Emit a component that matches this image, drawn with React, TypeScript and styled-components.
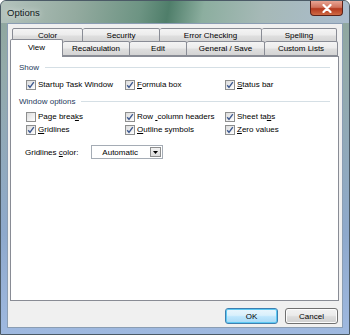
import React from 'react';
import styled, { createGlobalStyle } from 'styled-components';

const GlobalStyle = createGlobalStyle`
  html, body {
    margin: 0;
    padding: 0;
    background: #ffffff;
  }
  body {
    font-family: "Liberation Sans", Arial, sans-serif;
    font-size: 8px;
    color: #000;
  }
`;

const Window = styled.div`
  width: 350px;
  height: 335px;
  box-sizing: border-box;
  display: flex;
  flex-direction: column;
  background: linear-gradient(180deg, #8ea69b 0%, #93aaa9 20%, #8ea9cc 70%, #9fb9e0 100%);
  border: 1px solid #4b5a66;
  border-radius: 6px 6px 0 0;
  overflow: hidden;
`;

const TitleBar = styled.div`
  height: 22px;
  display: flex;
  align-items: center;
  padding: 0 6px;
  position: relative;
  background: linear-gradient(100deg, #b4c3bd 0%, #93aa9f 22%, #6d9483 40%, #4f7e6a 48%, #8cae9f 58%, #a6b9b7 75%, #aabcce 100%);
`;

const Title = styled.span`
  font-size: 9.5px;
  color: #101820;
  text-shadow: 0 0 6px rgba(255, 255, 255, 0.9);
`;

const CloseButton = styled.div`
  position: absolute;
  right: 6px;
  top: 0;
  width: 33px;
  height: 15px;
  border: 1px solid #5b2219;
  border-top: none;
  border-radius: 0 0 4px 4px;
  background: linear-gradient(180deg, #e8a493 0%, #d0735d 45%, #b4391e 55%, #cf6a44 100%);
  display: flex;
  align-items: center;
  justify-content: center;
  box-sizing: border-box;
`;

const Client = styled.div`
  flex: 1;
  margin: 0 6px 6px 6px;
  background: #f0f0f0;
  border: 1px solid #8a9db3;
  display: flex;
  flex-direction: column;
  padding: 4px 3px 0 2px;
`;

const TabRow = styled.div<{ $front?: boolean }>`
  display: flex;
  align-items: flex-end;
  height: ${p => (p.$front ? 14 : 15)}px;
  padding-left: ${p => (p.$front ? 0 : 2)}px;
  margin-top: ${p => (p.$front ? -1 : 0)}px;
`;

const Tab = styled.div<{ $w: number; $active?: boolean }>`
  width: ${p => p.$w}px;
  height: ${p => (p.$active ? 18 : p.$w && 15)}px;
  box-sizing: border-box;
  border: 1px solid #898c95;
  border-bottom: ${p => (p.$active ? 'none' : '1px solid #898c95')};
  border-left-width: ${p => (p.$active ? 1 : 0)}px;
  border-radius: 2px 2px 0 0;
  background: ${p =>
    p.$active
      ? '#ffffff'
      : 'linear-gradient(180deg, #f4f4f4 0%, #ececec 45%, #dedede 55%, #d4d4d4 100%)'};
  margin-bottom: ${p => (p.$active ? -1 : 0)}px;
  position: relative;
  z-index: ${p => (p.$active ? 2 : 1)};
  display: flex;
  align-items: center;
  justify-content: center;
  padding-bottom: ${p => (p.$active ? 3 : 0)}px;
  white-space: nowrap;

  &:first-child {
    border-left-width: 1px;
  }
`;

const Panel = styled.div`
  height: 245px;
  box-sizing: border-box;
  background: #ffffff;
  border: 1px solid #898c95;
  padding: 4px 8px 0 8px;
  display: flex;
  flex-direction: column;
`;

const GroupHeader = styled.div<{ $top: number }>`
  display: flex;
  align-items: center;
  height: 12px;
  gap: 6px;
  margin-top: ${p => p.$top}px;
  color: #1e395b;

  &::after {
    content: '';
    flex: 1;
    height: 1px;
    background: #d5dfe5;
  }
`;

const CheckGrid = styled.div<{ $top: number }>`
  display: grid;
  grid-template-columns: 99px 100px 100px;
  grid-auto-rows: 13px;
  padding-left: 7px;
  margin-top: ${p => p.$top}px;
`;

const CheckItem = styled.label`
  display: flex;
  align-items: center;
  gap: 2px;
  white-space: nowrap;
`;

const Box = styled.span<{ $checked?: boolean }>`
  width: 10px;
  height: 10px;
  box-sizing: border-box;
  border: 1px solid #8e8f8f;
  background: linear-gradient(135deg, #dcdcdc 0%, #f4f4f4 70%, #ffffff 100%);
  display: flex;
  align-items: center;
  justify-content: center;
  flex: none;
`;

const ColorRow = styled.div`
  display: flex;
  align-items: center;
  margin-top: 9px;
  padding-left: 6px;
  gap: 13px;
`;

const Select = styled.div`
  width: 72px;
  height: 14px;
  box-sizing: border-box;
  border: 1px solid #a5acb5;
  background: #fff;
  display: flex;
  align-items: center;
  padding: 0 1px 0 0;
`;

const SelectText = styled.span`
  flex: 1;
  padding-left: 10px;
`;

const SelectArrow = styled.span`
  width: 11px;
  height: 10px;
  box-sizing: border-box;
  border: 1px solid #8e8f8f;
  background: linear-gradient(180deg, #f2f2f2 0%, #dcdcdc 100%);
  display: flex;
  align-items: center;
  justify-content: center;
`;

const ButtonRow = styled.div`
  display: flex;
  justify-content: flex-end;
  gap: 7px;
  margin-top: 7px;
  padding-right: 1px;
`;

const Button = styled.div<{ $default?: boolean }>`
  width: 53px;
  height: 16px;
  box-sizing: border-box;
  border: 1px solid ${p => (p.$default ? '#3c7fb1' : '#707070')};
  border-radius: 3px;
  background: ${p =>
    p.$default
      ? 'linear-gradient(180deg, #eaf6fd 0%, #d9f0fc 45%, #bee6fd 55%, #a7d9f5 100%)'
      : 'linear-gradient(180deg, #f2f2f2 0%, #ebebeb 45%, #dddddd 55%, #cfcfcf 100%)'};
  box-shadow: inset 0 0 0 1px ${p => (p.$default ? '#5ec9f3' : '#fcfcfc')};
  display: flex;
  align-items: center;
  justify-content: center;
`;

const Key = styled.span`
  text-decoration: underline;
`;

const Check = () => (
  <svg width="8" height="8" viewBox="0 0 8 8">
    <path d="M1.2 4.2 L3 6.4 L6.8 1.2" fill="none" stroke="#3f5a90" strokeWidth="1.4" />
  </svg>
);

const CheckBox: React.FC<{ checked?: boolean; children: React.ReactNode }> = ({ checked, children }) => (
  <CheckItem>
    <Box $checked={checked}>{checked && <Check />}</Box>
    <span>{children}</span>
  </CheckItem>
);

export default function App() {
  return (
    <>
      <GlobalStyle />
      <Window>
        <TitleBar>
          <Title>Options</Title>
          <CloseButton>
            <svg width="10" height="9" viewBox="0 0 10 9">
              <path d="M1.5 1 L8.5 8 M8.5 1 L1.5 8" stroke="#ffffff" strokeWidth="2.2" strokeLinecap="round" />
            </svg>
          </CloseButton>
        </TitleBar>
        <Client>
          <TabRow>
            <Tab $w={71}>Color</Tab>
            <Tab $w={77}>Security</Tab>
            <Tab $w={102}>Error Checking</Tab>
            <Tab $w={75}>Spelling</Tab>
          </TabRow>
          <TabRow $front>
            <Tab $w={53} $active>View</Tab>
            <Tab $w={67}>Recalculation</Tab>
            <Tab $w={57}>Edit</Tab>
            <Tab $w={78}>General / Save</Tab>
            <Tab $w={73}>Custom Lists</Tab>
          </TabRow>
          <Panel>
            <GroupHeader $top={0}>Show</GroupHeader>
            <CheckGrid $top={5}>
              <CheckBox checked>Startup Task Window</CheckBox>
              <CheckBox checked><Key>F</Key>ormula box</CheckBox>
              <CheckBox checked><Key>S</Key>tatus bar</CheckBox>
            </CheckGrid>
            <GroupHeader $top={4}>Window options</GroupHeader>
            <CheckGrid $top={3}>
              <CheckBox>Page brea<Key>k</Key>s</CheckBox>
              <CheckBox checked>Row <Key>&nbsp;</Key>column headers</CheckBox>
              <CheckBox checked>Sheet ta<Key>b</Key>s</CheckBox>
              <CheckBox checked><Key>G</Key>ridlines</CheckBox>
              <CheckBox checked><Key>O</Key>utline symbols</CheckBox>
              <CheckBox checked><Key>Z</Key>ero values</CheckBox>
            </CheckGrid>
            <ColorRow>
              <span>Gridlines <Key>c</Key>olor:</span>
              <Select>
                <SelectText>Automatic</SelectText>
                <SelectArrow>
                  <svg width="5" height="3" viewBox="0 0 5 3">
                    <path d="M0 0 H5 L2.5 3 Z" fill="#000" />
                  </svg>
                </SelectArrow>
              </Select>
            </ColorRow>
          </Panel>
          <ButtonRow>
            <Button $default>OK</Button>
            <Button>Cancel</Button>
          </ButtonRow>
        </Client>
      </Window>
    </>
  );
}
